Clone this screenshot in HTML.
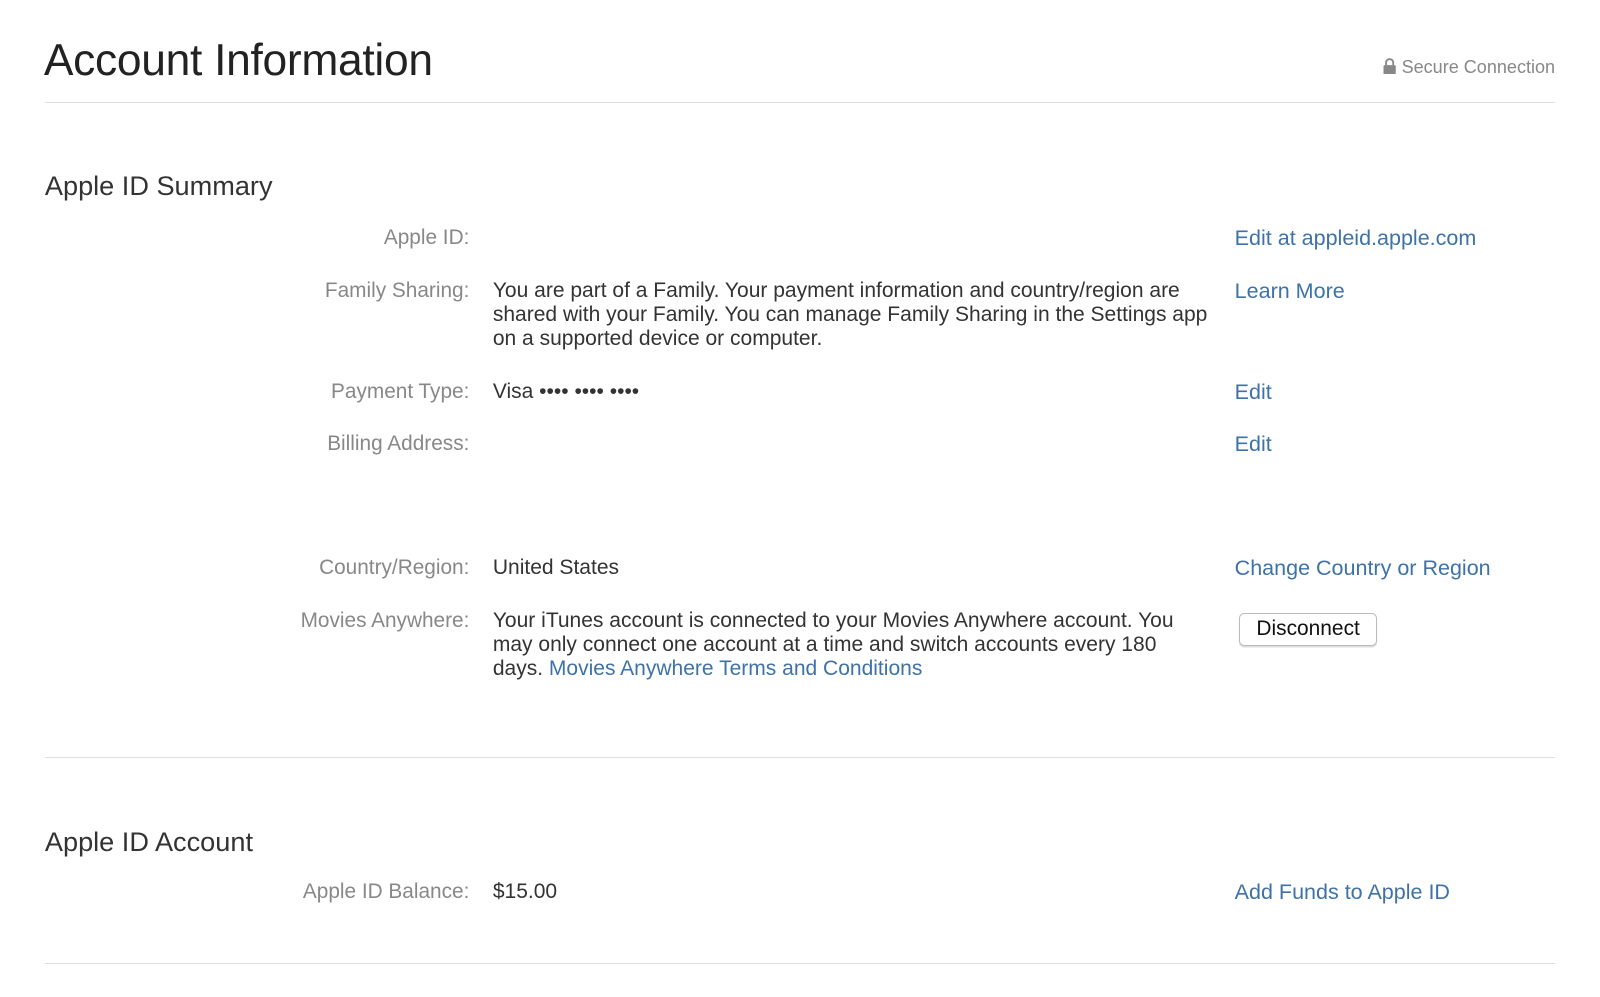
<!DOCTYPE html>
<html><head><meta charset="utf-8"><style>
html,body{margin:0;padding:0;background:#fff;overflow:hidden}
#w{zoom:1.0204;position:relative;width:1568px;height:977px;font-family:"Liberation Sans",sans-serif}
.a{position:absolute;white-space:nowrap}
h1{position:absolute;left:43px;top:31px;margin:0;font-weight:normal;font-size:43.5px;color:#222;line-height:56px;letter-spacing:-0.3px}
.sec{position:absolute;left:44px;font-size:26.6px;color:#333;line-height:32px}
.hr{position:absolute;left:44px;width:1480px;height:1px;background:#dedede}
.lbl{position:absolute;left:0;width:460px;text-align:right;font-size:20.4px;color:#888;line-height:24px;white-space:nowrap}
.val{position:absolute;left:483px;width:702px;font-size:20.6px;color:#333;line-height:23.5px}
.lnk{position:absolute;left:1210px;font-size:21.1px;color:#3e72a8;line-height:24px;white-space:nowrap}
.btn{position:absolute;left:1214px;top:601px;width:134px;height:30px;border:1px solid #bbb;border-radius:5px;font-size:20.5px;line-height:30px;text-align:center;color:#111;box-shadow:0 1px 1px #ddd}
</style></head><body><div id="w">
<h1>Account Information</h1>
<div class="a" style="left:1200px;width:324px;text-align:right;top:56px;font-size:17.7px;color:#888;line-height:20px">
<svg width="13" height="16" viewBox="0 0 13 16" style="vertical-align:-1px"><path d="M3 7V4.5a3.5 3.5 0 0 1 7 0V7" fill="none" stroke="#888" stroke-width="1.8"/><rect x="0.5" y="7" width="12" height="9" rx="1" fill="#888"/></svg> Secure Connection</div>
<div class="hr" style="top:100px"></div>
<div class="sec" style="top:167px">Apple ID Summary</div>
<div class="lbl" style="top:221px">Apple ID:</div>
<div class="lnk" style="top:221px">Edit at appleid.apple.com</div>
<div class="lbl" style="top:273px">Family Sharing:</div>
<div class="val" style="top:273px">You are part of a Family. Your payment information and country/region are shared with your Family. You can manage Family Sharing in the Settings app on a supported device or computer.</div>
<div class="lnk" style="top:273px">Learn More</div>
<div class="lbl" style="top:372px">Payment Type:</div>
<div class="val" style="top:372px">Visa •••• •••• ••••</div>
<div class="lnk" style="top:372px">Edit</div>
<div class="lbl" style="top:423px">Billing Address:</div>
<div class="lnk" style="top:423px">Edit</div>
<div class="lbl" style="top:545px">Country/Region:</div>
<div class="val" style="top:545px">United States</div>
<div class="lnk" style="top:545px">Change Country or Region</div>
<div class="lbl" style="top:597px">Movies Anywhere:</div>
<div class="val" style="top:597px">Your iTunes account is connected to your Movies Anywhere account. You may only connect one account at a time and switch accounts every 180 days. <span style="color:#3e72a8">Movies Anywhere Terms and Conditions</span></div>
<div class="btn">Disconnect</div>
<div class="hr" style="top:742px"></div>
<div class="sec" style="top:809px">Apple ID Account</div>
<div class="lbl" style="top:862px">Apple ID Balance:</div>
<div class="val" style="top:862px">$15.00</div>
<div class="lnk" style="top:862px">Add Funds to Apple ID</div>
<div class="hr" style="top:944px"></div>
</div></body></html>
